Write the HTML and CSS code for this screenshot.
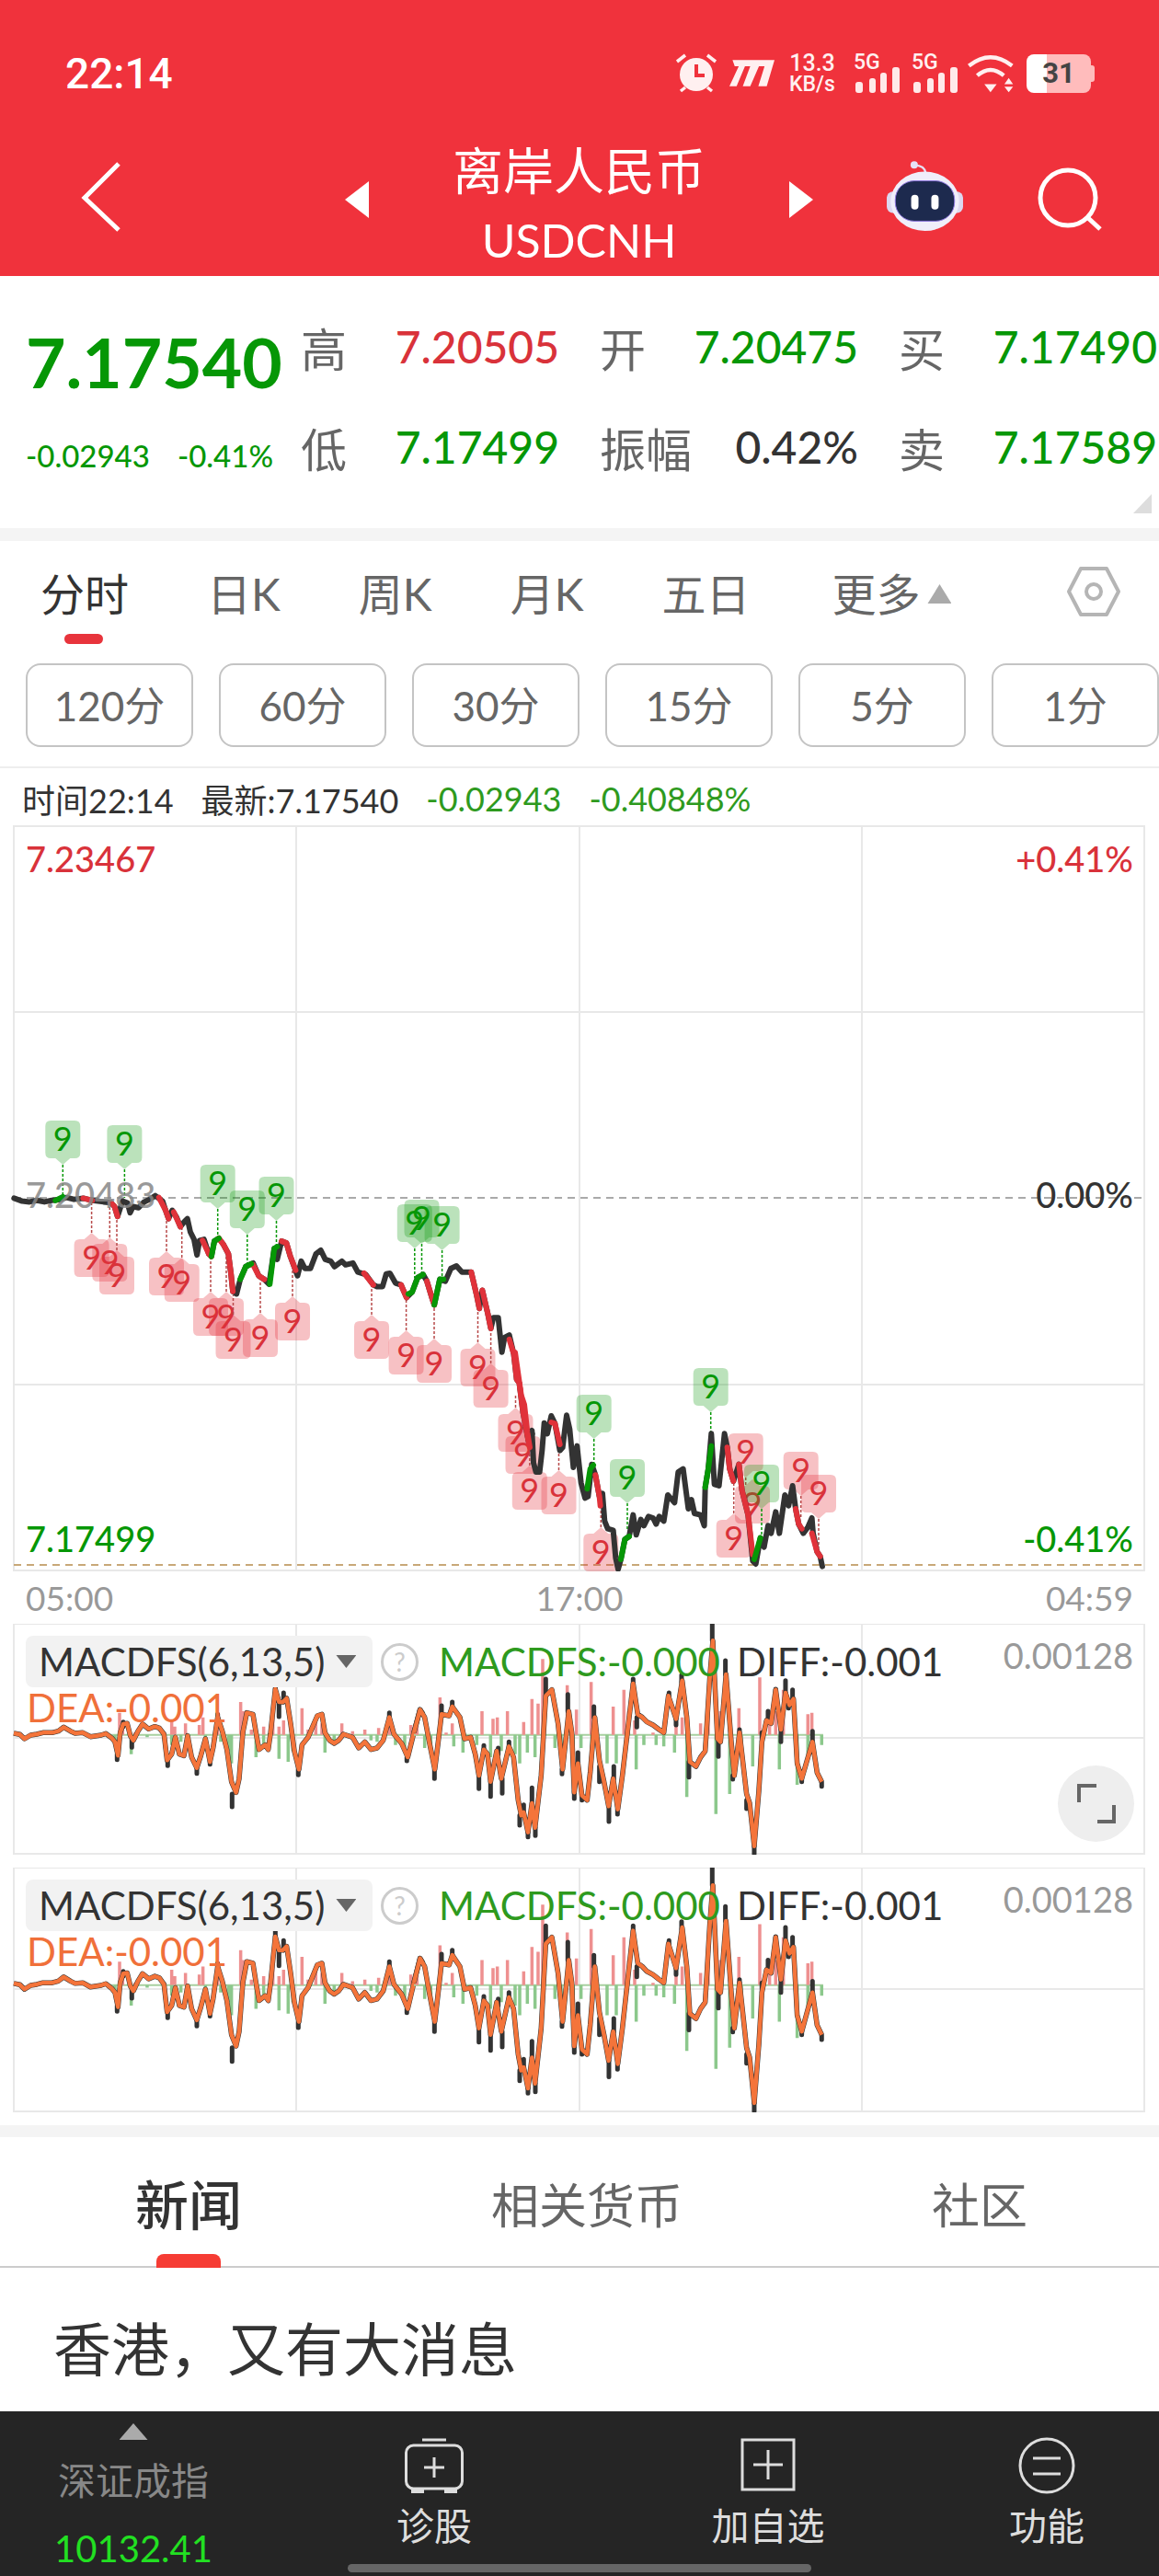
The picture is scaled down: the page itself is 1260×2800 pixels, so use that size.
FILE: index.html
```html
<!DOCTYPE html>
<html>

	<head>
		<meta charset="utf-8">
		<title>USDCNH</title>
		<link rel="stylesheet" href="styles.css">
	</head>

	<body>
		<div id="page">
			<div id="topbar">
				<div class="status">
					<span class="clock">22:14</span>
					<div class="status-icons">
						<svg width="46" height="44" viewBox="0 0 46 44">
							<circle cx="23" cy="23" r="18" fill="#fff0f0"/>
							<path d="M23 12V24H32" fill="none" stroke="#f0323c" stroke-width="4"/>
							<path d="M2 9L11 2M35 2L44 9M6 41L11 37M40 41L35 37" stroke="#fff0f0" stroke-width="3.5" fill="none"/>
						</svg>
						<svg width="49" height="29" viewBox="205 72 145 85">
							<path d="M215 72H350L325 157H298L318 92H300L272 157H248L272 92H255L228 157H205L235 92H222Z" fill="#fff0f0"/>
						</svg>
						<div class="speed"><b>13.3</b><span>KB/s</span></div>
						<svg class="signal" width="56" height="54" viewBox="-3 -10 56 54">
							<text class="sig-text" x="0" y="17">5G</text>
							<rect class="sig-bar" x="2" y="31" width="8" height="12" rx="3"/>
							<rect class="sig-bar" x="17" y="27" width="7" height="16" rx="3"/>
							<rect class="sig-bar" x="29" y="21" width="7" height="22" rx="3"/>
							<rect class="sig-bar" x="42" y="15" width="8" height="28" rx="3"/>
						</svg>
						<svg class="signal" width="56" height="54" viewBox="-3 -10 56 54">
							<text class="sig-text" x="0" y="17">5G</text>
							<rect class="sig-bar" x="2" y="31" width="8" height="12" rx="3"/>
							<rect class="sig-bar" x="17" y="27" width="7" height="16" rx="3"/>
							<rect class="sig-bar" x="29" y="21" width="7" height="22" rx="3"/>
							<rect class="sig-bar" x="42" y="15" width="8" height="28" rx="3"/>
						</svg>
						<svg class="wifi" width="52" height="43" viewBox="998 50 155 128">
							<path d="M1005 90Q1075 35 1145 90M1032 122Q1075 85 1118 122" fill="none" stroke="#fff0f0" stroke-width="13"/>
							<path d="M1055 150H1095L1075 176ZM1120 150H1148L1134 130ZM1120 158H1148L1134 176Z" fill="#fff0f0"/>
						</svg>
						<div class="battery">31</div>
					</div>
				</div>
				<div class="nav">
					<svg class="back" width="45" height="78" viewBox="0 0 45 78">
						<path d="M41 3L4 40L41 75" fill="none" stroke="#fff" stroke-width="5"/>
					</svg>
					<div class="tri tri-left"></div>
					<div class="title">
						<div class="title-cn">离岸人民币</div>
						<div class="title-en">USDCNH</div>
					</div>
					<div class="tri tri-right"></div>
					<svg class="robot" width="85" height="77" viewBox="728 405 254 232">
						<path d="M820 418Q855 420 858 445" fill="none" stroke="#e6e2f6" stroke-width="7"/>
						<circle cx="820" cy="418" r="12" fill="#e6e2f6"/>
						<rect x="730" y="505" width="250" height="70" rx="20" fill="#dcd8f0"/>
						<ellipse cx="855" cy="537" rx="112" ry="97" fill="#f0eefa"/>
						<rect x="758" y="470" width="194" height="132" rx="62" fill="#1d2a4e" stroke="#8f78e0" stroke-width="3"/>
						<rect x="810" y="516" width="24" height="48" rx="12" fill="#fff"/>
						<rect x="876" y="516" width="24" height="48" rx="12" fill="#fff"/>
					</svg>
					<svg class="search" width="75" height="72" viewBox="0 0 75 72">
						<circle cx="36" cy="35" r="30" fill="none" stroke="#fff" stroke-width="5"/>
						<path d="M58 57L71 69" stroke="#fff" stroke-width="5"/>
					</svg>
				</div>
			</div>

			<div class="quote">
				<div class="quote-main">
					<div class="price">7.17540</div>
					<div class="change"><span>-0.02943</span><span>-0.41%</span></div>
				</div>
				<div class="quote-grid">
					<div class="cell"><span class="key">高</span><span class="val red">7.20505</span></div>
					<div class="cell"><span class="key">开</span><span class="val green">7.20475</span></div>
					<div class="cell"><span class="key">买</span><span class="val green">7.17490</span></div>
					<div class="cell"><span class="key">低</span><span class="val green">7.17499</span></div>
					<div class="cell"><span class="key">振幅</span><span class="val dark">0.42%</span></div>
					<div class="cell"><span class="key">卖</span><span class="val green">7.17589</span></div>
				</div>
				<div class="corner"></div>
			</div>
			<div class="band"></div>

			<div class="tabs">
				<div class="tab selected">分时</div>
				<div class="tab">日K</div>
				<div class="tab">周K</div>
				<div class="tab">月K</div>
				<div class="tab">五日</div>
				<div class="tab more">更多<i></i></div>
				<svg class="hex" width="60" height="56" viewBox="0 0 60 56">
					<path d="M16 3H44L57 28L44 53H16L3 28Z" fill="none" stroke="#b5b5b5" stroke-width="4" stroke-linejoin="round"/>
					<circle cx="30" cy="28" r="8" fill="none" stroke="#b5b5b5" stroke-width="4"/>
				</svg>
			</div>
			<div class="periods">
				<div class="period">120分</div>
				<div class="period">60分</div>
				<div class="period">30分</div>
				<div class="period">15分</div>
				<div class="period">5分</div>
				<div class="period">1分</div>
			</div>
			<div class="info">
				<span>时间22:14</span>
				<span>最新:7.17540</span>
				<span class="info-green">-0.02943</span>
				<span class="info-green">-0.40848%</span>
			</div>

			<div class="chart">
				<svg class="canvas" width="1260" height="811" viewBox="0 897 1260 811">
					<path class="grid" d="M15 898H1244V1707H15ZM15 1100H1244M15 1505H1244M322 898V1707M630 898V1707M937 898V1707"/>
					<path class="dash-gray" d="M15 1302H1244"/>
					<path class="dash-brown" d="M15 1701H1244"/>
					<defs>
						<path id="pinDown" d="M0 0L-8 -7H-13Q-19 -7 -19 -13V-42Q-19 -48 -13 -48H13Q19 -48 19 -42V-13Q19 -7 13 -7H8Z"/>
						<path id="pinUp" d="M0 0L-8 7H-13Q-19 7 -19 13V42Q-19 48 -13 48H13Q19 48 19 42V13Q19 7 13 7H8Z"/>
					</defs>

					<!-- red pins, tip up -->
					<g class="pin sell" transform="translate(99.6 1340)"><line y2="-35"/><use href="#pinUp"/><text y="40">9</text></g>
					<g class="pin sell" transform="translate(119.3 1345)"><line y2="-36"/><use href="#pinUp"/><text y="40">9</text></g>
					<g class="pin sell" transform="translate(127 1359)"><line y2="-36"/><use href="#pinUp"/><text y="40">9</text></g>
					<g class="pin sell" transform="translate(181 1360)"><line y2="-35"/><use href="#pinUp"/><text y="40">9</text></g>
					<g class="pin sell" transform="translate(197.7 1367)"><line y2="-32"/><use href="#pinUp"/><text y="40">9</text></g>
					<g class="pin sell" transform="translate(229 1404)"><line y2="-36"/><use href="#pinUp"/><text y="40">9</text></g>
					<g class="pin sell" transform="translate(246 1404)"><line y2="-44"/><use href="#pinUp"/><text y="40">9</text></g>
					<g class="pin sell" transform="translate(253.5 1429)"><line y2="-21"/><use href="#pinUp"/><text y="40">9</text></g>
					<g class="pin sell" transform="translate(283 1427)"><line y2="-35"/><use href="#pinUp"/><text y="40">9</text></g>
					<g class="pin sell" transform="translate(318 1409)"><line y2="-29"/><use href="#pinUp"/><text y="40">9</text></g>
					<g class="pin sell" transform="translate(404 1429)"><line y2="-35"/><use href="#pinUp"/><text y="40">9</text></g>
					<g class="pin sell" transform="translate(441.6 1446)"><line y2="-35"/><use href="#pinUp"/><text y="40">9</text></g>
					<g class="pin sell" transform="translate(472 1455)"><line y2="-36"/><use href="#pinUp"/><text y="40">9</text></g>
					<g class="pin sell" transform="translate(519.5 1459)"><line y2="-36"/><use href="#pinUp"/><text y="40">9</text></g>
					<g class="pin sell" transform="translate(533.6 1482)"><line y2="-36"/><use href="#pinUp"/><text y="40">9</text></g>
					<g class="pin sell" transform="translate(560.5 1530)"><line y2="-15"/><use href="#pinUp"/><text y="40">9</text></g>
					<g class="pin sell" transform="translate(568.5 1554)"><line y2="-19"/><use href="#pinUp"/><text y="40">9</text></g>
					<g class="pin sell" transform="translate(575.8 1593)"><line y2="-19"/><use href="#pinUp"/><text y="40">9</text></g>
					<g class="pin sell" transform="translate(607.5 1598)"><line y2="-22"/><use href="#pinUp"/><text y="40">9</text></g>
					<g class="pin sell" transform="translate(653.3 1660)"><line y2="-20"/><use href="#pinUp"/><text y="40">9</text></g>
					<g class="pin sell" transform="translate(797.7 1645)"><line y2="-38"/><use href="#pinUp"/><text y="40">9</text></g>
					<g class="pin sell" transform="translate(818 1608)"><use href="#pinUp"/><text y="40">9</text></g>
					<g class="pin sell" transform="translate(810.7 1606)"><line y2="10"/><use href="#pinDown"/><text y="-15">9</text></g>
					<g class="pin sell" transform="translate(870.7 1626)"><line y2="24"/><use href="#pinDown"/><text y="-15">9</text></g>
					<g class="pin sell" transform="translate(890 1651)"><line y2="31"/><use href="#pinDown"/><text y="-15">9</text></g>

					<!-- green pins, tip down -->
					<g class="pin buy" transform="translate(68.3 1266)"><line y2="36"/><use href="#pinDown"/><text y="-15">9</text></g>
					<g class="pin buy" transform="translate(135.4 1271)"><line y2="31"/><use href="#pinDown"/><text y="-15">9</text></g>
					<g class="pin buy" transform="translate(236.7 1314)"><line y2="32"/><use href="#pinDown"/><text y="-15">9</text></g>
					<g class="pin buy" transform="translate(268.8 1342)"><line y2="31"/><use href="#pinDown"/><text y="-15">9</text></g>
					<g class="pin buy" transform="translate(300.5 1327)"><line y2="28"/><use href="#pinDown"/><text y="-15">9</text></g>
					<g class="pin buy" transform="translate(450.8 1357)"><line y2="32"/><use href="#pinDown"/><text y="-15">9</text></g>
					<g class="pin buy" transform="translate(458.5 1352)"><line y2="33"/><use href="#pinDown"/><text y="-15">9</text></g>
					<g class="pin buy" transform="translate(480.6 1359)"><line y2="30"/><use href="#pinDown"/><text y="-15">9</text></g>
					<g class="pin buy" transform="translate(645.7 1564)"><line y2="28"/><use href="#pinDown"/><text y="-15">9</text></g>
					<g class="pin buy" transform="translate(682 1634)"><line y2="29"/><use href="#pinDown"/><text y="-15">9</text></g>
					<g class="pin buy" transform="translate(772.7 1535)"><line y2="23"/><use href="#pinDown"/><text y="-15">9</text></g>
					<g class="pin buy" transform="translate(828 1640)"><line y2="28"/><use href="#pinDown"/><text y="-15">9</text></g>

					<g transform="translate(0 1100) scale(.4018 .3954)">
						<polyline class="ln-black" points="38,512 60,520 80,522 100,518 120,522 140,518 160,516 180,510 200,515 225,512 250,518 280,522 300,524 310,535 318,562 325,540 332,520 345,525 352,552 360,535 375,538 390,522 405,515 420,505 440,520 448,545 456,568 466,545 478,565 488,590 500,575 507,568 515,605 525,625 533,668 540,628 552,625 565,665 572,672 580,630 592,622 605,640 618,665 625,720 630,768 640,775 650,735 665,700 685,690 700,725 715,735 728,748 742,650 750,680 762,630 775,635 785,670 805,725 815,685 825,705 840,705 855,665 868,655 880,680 895,685 905,700 925,685 935,695 955,690 968,715 990,722 1010,750 1020,755 1035,755 1045,720 1055,718 1070,745 1085,750 1100,785 1115,770 1130,730 1145,722 1155,740 1170,790 1175,805 1190,735 1205,740 1220,705 1235,698 1250,715 1275,715 1290,780 1297,815 1305,765 1320,830 1328,870 1335,840 1348,840 1358,935 1365,895 1378,888 1390,940 1398,1010 1405,1020 1415,1100 1430,1180 1440,1160"/>
						<path class="ln-red" d="M225 512L250 518M300 524L310 535L318 562M430 510L448 545L456 568M470 550L488 590M548 628L565 665L572 672M592 622L605 640L618 665L625 720L630 768M685 695L700 725L715 735M762 630L775 635L785 670L800 710M985 718L1010 750M1085 750L1100 785M1155 740L1170 790L1175 805M1275 715L1290 780L1297 815M1305 765L1320 830L1328 870M1378 900L1390 940L1398 1010L1405 1020L1415 1100L1430 1180L1440 1200"/>
						<path class="ln-green" d="M150 518L170 508M572 672L580 630L592 622M650 735L665 700L680 692M730 748L742 650L750 645M1105 775L1115 770L1130 730L1145 722M1175 805L1190 735L1200 735"/>
					</g>
					<g transform="translate(560 1460) scale(.3333)">
						<polyline class="ln-black" points="45,300 55,285 60,390 68,420 80,420 88,350 95,260 105,295 118,237 130,262 146,350 155,340 168,235 178,280 190,405 202,335 215,455 228,505 238,500 250,395 262,430 275,500 285,490 292,580 302,605 320,610 328,700 336,737 345,705 358,640 372,630 385,560 395,625 410,575 420,595 435,565 450,570 460,590 470,565 485,580 498,495 520,520 532,420 548,410 565,540 575,510 585,555 605,560 617,595 620,470 630,410 640,295 650,460 665,465 683,295 692,340 700,410 712,450 730,395 740,480 760,560 775,710 785,720 800,635 812,665 825,595 835,620 850,550 862,620 880,495 892,530 905,465 915,540 925,590 940,620 955,600 968,570 972,620 985,680 995,695 1002,728"/>
						<path class="ln-red" d="M0 30L10 100L20 170L30 200L40 290L48 340M118 258L130 262L146 330M262 430L275 500L278 530M692 340L700 410L712 450M730 395L740 480L760 560L775 690M915 540L925 590L935 605M968 620L985 680L995 695"/>
						<path class="ln-green" d="M235 475L245 410L255 398M345 705L358 640L372 630M620 470L630 410L640 335M780 705L800 635"/>
					</g>
				</svg>
				<span class="lab lab-tl red">7.23467</span>
				<span class="lab lab-tr red">+0.41%</span>
				<span class="lab lab-ml gray">7.20483</span>
				<span class="lab lab-mr dark">0.00%</span>
				<span class="lab lab-bl green">7.17499</span>
				<span class="lab lab-br green">-0.41%</span>
			</div>
			<div class="axis"><span>05:00</span><span>17:00</span><span>04:59</span></div>

			<div class="sub sub-one">
				<svg class="canvas" width="1260" height="251" viewBox="0 1765 1260 251">
					<path class="grid" d="M15 1765H1244V2015H15ZM15 1889H1244M322 1765V2015M630 1765V2015M937 1765V2015"/>
					<g id="macd">
						<g transform="translate(10 1760) scale(.3333)">
							<path class="zero" d="M330 377H1350"/>
							<path class="bar-red" d="M360 377V305M370 377V350M410 377V370M530 377V330M540 377V350M575 377V340M620 377V345M632 377V320M680 377V315M755 377V270M765 377V300M790 377V360M830 377V350M860 377V320M880 377V350M895 377V330M955 377V290M975 377V360M1000 377V330M1020 377V340M1085 377V340M1120 377V365M1160 377V360M1205 377V355M1240 377V330M1310 377V345M1325 377V340"/>
							<path class="bar-green" d="M345 377V400M398 377V440M450 377V385M530 377V410M560 377V400M585 377V420M640 377V430M690 377V400M715 377V430M725 377V470M805 377V450M830 377V420M880 377V455M910 377V465M925 377V430M1030 377V435M1060 377V410M1180 377V395M1200 377V400M1260 377V410M1290 377V430"/>
							<path class="tips" d="M352 440V458M372 335V350M400 385V418M517 460V478M612 485V503M655 465V473M680 310V325M727 570V612M868 190V228M880 270V318M895 240V270M943 490V508M1297 450V462M1240 305V320"/>
							<polyline class="ln-dark" points="15,372 35,376 50,390 70,378 90,375 110,370 140,370 160,365 178,352 200,365 215,372 240,370 265,383 300,378 315,373 335,388 345,400 355,445 362,370 372,342 385,340 395,380 405,395 420,365 435,342 455,358 475,350 490,355 505,375 515,460 530,440 542,385 555,440 570,445 582,380 595,450 612,485 625,445 640,390 655,465 665,420 680,320 695,365 710,425 725,530 740,565 750,520 762,370 775,305 795,310 805,370 815,425 835,410 845,425 852,375 868,228 880,270 893,270 905,258 918,340 930,430 945,490 955,410 975,385 990,350 1005,315 1020,310 1030,370 1045,395 1060,405 1075,395 1090,375 1120,385 1140,420 1160,400 1180,425 1200,420 1220,395 1240,320 1255,375 1280,405 1300,450 1320,370 1340,295 1350,310"/>
							<polyline class="ln-orange" points="15,372 35,376 50,390 70,378 90,375 110,370 140,370 160,365 178,352 200,365 215,372 240,370 265,383 300,378 315,373 335,388 345,400 355,445 362,370 372,342 385,340 395,380 405,395 420,365 435,342 455,358 475,350 490,355 505,375 515,460 530,440 542,385 555,440 570,445 582,380 595,450 612,485 625,445 640,390 655,465 665,420 680,320 695,365 710,425 725,530 740,565 750,520 762,370 775,305 795,310 805,370 815,425 835,410 845,425 852,375 868,228 880,270 893,270 905,258 918,340 930,430 945,490 955,410 975,385 990,350 1005,315 1020,310 1030,370 1045,395 1060,405 1075,395 1090,375 1120,385 1140,420 1160,400 1180,425 1200,420 1220,395 1240,320 1255,375 1280,405 1300,450 1320,370 1340,295 1350,310"/>
						</g>
						<g transform="translate(450 1760) scale(.3333)">
							<path class="zero" d="M0 377H1335"/>
							<path class="bar-red" d="M10 377V345M85 377V255M105 377V370M125 377V340M222 377V300M258 377V325M272 377V320M305 377V300M358 377V335M385 377V260M405 377V275M420 377V130M500 377V215M530 377V295M578 377V205M650 377V285M685 377V230M700 377V300M720 377V330M780 377V370M855 377V350M875 377V320M935 377V340M960 377V300M1000 377V300M1060 377V290M1128 377V190M1160 377V320M1180 377V300M1205 377V230M1285 377V310M1298 377V305"/>
							<path class="bar-green" d="M35 377V420M55 377V430M130 377V415M160 377V435M205 377V410M250 377V450M285 377V430M330 377V440M345 377V470M370 377V435M395 377V450M460 377V420M480 377V440M520 377V410M545 377V420M580 377V430M630 377V470M660 377V470M725 377V490M750 377V410M790 377V410M815 377V415M850 377V435M890 377V580M985 377V635M1030 377V570M1068 377V420M1105 377V480M1192 377V490M1250 377V540M1285 377V440M1330 377V410"/>
							<path class="tips" d="M67 490V520M90 282V310M125 270V290M212 510V553M228 412V430M250 530V578M275 420V440M288 520V568M310 400V420M372 695V710M396 680V706M358 605V630M385 550V600M345 640V672M430 195V250M483 490V505M502 245V300M523 560V585M535 435V470M548 575V590M587 285V320M605 480V530M636 610V660M652 480V520M664 620V636M715 195V215M727 320V352M832 240V260M855 325V345M873 182V205M897 465V515M973 15V70M993 390V448M1016 135V180M1040 510V522M1062 360V380M1085 590V618M1110 740V765M1135 370V400M1155 300V330M1180 228V240M1212 200V240M1222 270V290M1235 230V260M1197 360V400M1265 520V530M1300 365V400M1330 530V545"/>
							<polyline class="ln-dark" points="0,370 20,295 35,320 50,400 68,490 78,410 90,310 115,315 125,285 150,320 165,390 185,385 200,440 212,510 228,425 240,440 250,530 270,430 285,520 310,415 325,450 340,590 350,640 358,630 372,695 385,600 395,680 415,510 430,250 450,230 470,340 485,490 505,300 515,370 523,565 535,470 548,575 565,590 575,500 590,320 605,460 620,530 635,610 650,520 665,620 680,510 695,380 715,210 730,310 745,320 760,335 780,345 800,360 815,370 830,250 855,325 875,200 890,320 900,465 920,480 935,450 950,430 965,190 975,70 990,390 1000,400 1018,180 1035,400 1045,510 1062,370 1085,570 1095,600 1110,740 1125,560 1135,400 1150,330 1165,340 1180,230 1197,360 1212,240 1225,280 1238,260 1250,470 1265,520 1300,400 1315,500 1330,530"/>
							<polyline class="ln-orange" points="0,370 20,295 35,320 50,400 68,490 78,410 90,310 115,315 125,285 150,320 165,390 185,385 200,440 212,510 228,425 240,440 250,530 270,430 285,520 310,415 325,450 340,590 350,640 358,630 372,695 385,600 395,680 415,510 430,250 450,230 470,340 485,490 505,300 515,370 523,565 535,470 548,575 565,590 575,500 590,320 605,460 620,530 635,610 650,520 665,620 680,510 695,380 715,210 730,310 745,320 760,335 780,345 800,360 815,370 830,250 855,325 875,200 890,320 900,465 920,480 935,450 950,430 965,190 975,70 990,390 1000,400 1018,180 1035,400 1045,510 1062,370 1085,570 1095,600 1110,740 1125,560 1135,400 1150,330 1165,340 1180,230 1197,360 1212,240 1225,280 1238,260 1250,470 1265,520 1300,400 1315,500 1330,530"/>
						</g>
					</g>
				</svg>
				<div class="legend">
					<div class="picker">MACDFS(6,13,5)<i></i></div>
					<div class="help">?</div>
					<span class="leg-macd">MACDFS:-0.000</span>
					<span class="leg-diff">DIFF:-0.001</span>
					<span class="leg-max">0.00128</span>
				</div>
				<div class="leg-dea">DEA:-0.001</div>
				<div class="expand">
					<svg width="42" height="43" viewBox="0 0 42 43">
						<path d="M21 2H2V20M22 41H40V23" fill="none" stroke="#666" stroke-width="4"/>
					</svg>
				</div>
			</div>

			<div class="sub sub-two">
				<svg class="canvas" width="1260" height="266" viewBox="0 2030 1260 266">
					<path class="grid" d="M15 2030H1244V2295H15ZM15 2162H1244M322 2030V2295M630 2030V2295M937 2030V2295"/>
					<use href="#macd" transform="translate(0 2158) scale(1 1.06) translate(0 -1886)"/>
				</svg>
				<div class="legend">
					<div class="picker">MACDFS(6,13,5)<i></i></div>
					<div class="help">?</div>
					<span class="leg-macd">MACDFS:-0.000</span>
					<span class="leg-diff">DIFF:-0.001</span>
					<span class="leg-max">0.00128</span>
				</div>
				<div class="leg-dea">DEA:-0.001</div>
			</div>

			<div class="band band-low"></div>
			<div class="news-tabs">
				<div class="news-tab selected">新闻</div>
				<div class="news-tab">相关货币</div>
				<div class="news-tab">社区</div>
			</div>
			<div class="headline">香港，又有大消息</div>

			<div class="bottom">
				<div class="index">
					<i></i>
					<div class="index-name">深证成指</div>
					<div class="index-num">10132.41</div>
				</div>
				<div class="action">
					<svg width="66" height="62" viewBox="0 0 66 62">
						<path d="M20 3H46" stroke="#ddd" stroke-width="3"/>
						<rect x="2.5" y="9" width="61" height="47" rx="8" fill="none" stroke="#ddd" stroke-width="3"/>
						<path d="M33 22V44M22 33H44" stroke="#ddd" stroke-width="3"/>
						<path d="M8 57H22V61H8ZM44 57H58V61H44Z" fill="#ddd"/>
					</svg>
					<span>诊股</span>
				</div>
				<div class="action">
					<svg width="60" height="62" viewBox="0 0 60 62">
						<rect x="2" y="3" width="56" height="54" fill="none" stroke="#ddd" stroke-width="3"/>
						<path d="M30 14V46M14 30H46" stroke="#ddd" stroke-width="3"/>
					</svg>
					<span>加自选</span>
				</div>
				<div class="action">
					<svg width="62" height="62" viewBox="0 0 62 62">
						<circle cx="31" cy="31" r="29" fill="none" stroke="#ddd" stroke-width="3"/>
						<path d="M16 23H46M16 40H46" stroke="#ddd" stroke-width="3"/>
					</svg>
					<span>功能</span>
				</div>
				<div class="homebar"></div>
			</div>
		</div>
	</body>

</html>
```

FILE: styles.css
```css
* {
	box-sizing: border-box;
}
body {
	margin: 0px;
	background-color: #fff;
	font-family: Lato, "Noto Sans CJK SC", sans-serif;
	color: #333;
}
#page {
	position: relative;
	width: 1260px;
	height: 2800px;
	overflow: hidden;
}
.red {
	color: #d9323a;
}
.green {
	color: #069706;
}
.dark {
	color: #333;
}
.gray {
	color: #888;
}

/* 顶部 */
#topbar {
	height: 300px;
	background-color: #f0323c;
	color: #fff;
}
.status {
	display: flex;
	align-items: center;
	height: 143px;
	padding: 16px 70px 0px 71px;
}
.clock {
	font-family: Roboto, sans-serif;
	font-size: 46px;
	font-weight: 500;
}
.status-icons {
	display: flex;
	align-items: center;
	gap: 13px;
	height: 54px;
	margin-left: auto;
}
.speed {
	display: flex;
	flex-direction: column;
	align-items: center;
	width: 48px;
	margin: 0px 8px 0px 4px;
	font-family: Roboto, sans-serif;
	font-weight: 500;
	color: #fff0f0;
}
.speed b {
	font-size: 25px;
	font-weight: 500;
	line-height: 24px;
}
.speed span {
	font-size: 23px;
	line-height: 22px;
}
.signal {
	margin: -10px -3px 0px -3px;
}
.sig-text {
	font-family: Roboto, sans-serif;
	font-size: 23px;
	font-weight: 500;
	fill: #fff0f0;
}
.sig-bar {
	fill: #ffe9e9;
}
.wifi {
	margin-left: -3px;
}
.battery {
	position: relative;
	width: 70px;
	height: 42px;
	margin-right: 4px;
	border-radius: 8px;
	background: linear-gradient(90deg, #fff 0px, #fff 22px, #ffbcbc 22px);
	color: #444;
	font-family: Roboto, sans-serif;
	font-size: 31px;
	font-weight: 700;
	line-height: 42px;
	text-align: center;
}
.battery:after {
	content: "";
	position: absolute;
	top: 12px;
	right: -4px;
	width: 4px;
	height: 18px;
	border-radius: 0px 3px 3px 0px;
	background-color: #ffbcbc;
}
.nav {
	display: flex;
	align-items: flex-start;
	height: 157px;
	padding: 4px 0px 0px 88px;
}
.back {
	margin-top: 28px;
}
.tri {
	width: 26px;
	height: 40px;
	margin-top: 50px;
	background-color: #fff;
}
.tri-left {
	margin-left: 242px;
	clip-path: polygon(100% 0, 0 50%, 100% 100%);
}
.tri-right {
	clip-path: polygon(0 0, 100% 50%, 0 100%);
}
.title {
	width: 457px;
	text-align: center;
}
.title-cn {
	font-size: 55px;
	line-height: 76px;
}
.title-en {
	font-size: 50px;
	line-height: 76px;
}
.robot {
	margin: 28px 0px 0px 79px;
}
.search {
	margin: 33px 0px 0px 77px;
}

/* 报价 */
.quote {
	position: relative;
	display: flex;
	height: 274px;
	padding: 22px 0px 0px 28px;
}
.quote-main {
	width: 299px;
	padding-top: 16px;
}
.price {
	color: #069706;
	font-size: 75px;
	font-weight: 700;
	line-height: 110px;
}
.change {
	display: flex;
	gap: 30px;
	margin-top: 22px;
	color: #069706;
	font-size: 33px;
	font-weight: 500;
	line-height: 50px;
}
.quote-grid {
	display: grid;
	grid-template-columns: repeat(3, 281px);
	grid-auto-rows: 109px;
	column-gap: 44px;
}
.cell {
	display: flex;
	align-items: center;
	justify-content: space-between;
}
.key {
	color: #666;
	font-size: 50px;
}
.val {
	font-size: 48px;
	font-weight: 500;
}
.corner {
	position: absolute;
	right: 8px;
	bottom: 16px;
	width: 20px;
	height: 21px;
	background-color: #ddd;
	clip-path: polygon(100% 0, 100% 100%, 0 100%);
}
.band {
	height: 14px;
	background-color: #f4f4f4;
}

/* 周期 */
.tabs {
	display: flex;
	align-items: flex-start;
	gap: 85px;
	height: 116px;
	padding-left: 44px;
}
.tab {
	position: relative;
	color: #666;
	font-size: 48px;
	line-height: 116px;
}
.tab.selected {
	color: #333;
}
.tab.selected:after {
	content: "";
	position: absolute;
	top: 101px;
	left: 26px;
	width: 42px;
	height: 11px;
	border-radius: 6px;
	background-color: #e8343c;
}
.more {
	margin-left: 4px;
}
.more i {
	display: inline-block;
	width: 26px;
	height: 21px;
	margin: 0px 0px 8px 8px;
	background-color: #aaa;
	clip-path: polygon(50% 0, 100% 100%, 0 100%);
}
.hex {
	margin: 27px 0px 0px auto;
	margin-right: 41px;
}
.periods {
	display: flex;
	gap: 28px;
	width: 1262px;
	margin-top: 17px;
	padding: 0px 0px 0px 28px;
}
.period {
	flex: 0 0 182px;
	height: 91px;
	border: solid 2px #c4c4c4;
	border-radius: 16px;
	color: #666;
	font-size: 44px;
	line-height: 89px;
	text-align: center;
}
.info {
	display: flex;
	align-items: center;
	gap: 30px;
	height: 64px;
	margin-top: 21px;
	padding: 4px 0px 0px 24px;
	border-top: solid 2px #eee;
	font-size: 36px;
}
.info-green {
	color: #2e9a1e;
}

/* 分时图 */
.chart {
	position: relative;
	height: 811px;
}
.canvas {
	position: absolute;
	top: 0px;
	left: 0px;
}
.canvas * {
	vector-effect: non-scaling-stroke;
}
.grid {
	fill: none;
	stroke: #e8e8e8;
	stroke-width: 2;
}
.dash-gray {
	stroke: #aaa;
	stroke-width: 2;
	stroke-dasharray: 8 6;
}
.dash-brown {
	stroke: #c8a878;
	stroke-width: 2;
	stroke-dasharray: 8 6;
}
.pin text {
	font-family: Lato, sans-serif;
	font-size: 36px;
	text-anchor: middle;
}
.pin line {
	stroke-width: 1.5;
	stroke-dasharray: 3 2;
}
.pin.buy use {
	fill: #0a960a;
	fill-opacity: .28;
}
.pin.buy text {
	fill: #069706;
}
.pin.buy line {
	stroke: #069706;
}
.pin.sell use {
	fill: #e6323c;
	fill-opacity: .3;
}
.pin.sell text {
	fill: #d9323a;
}
.pin.sell line {
	stroke: #b84a4a;
}
.ln-black,
.ln-red,
.ln-green {
	fill: none;
	stroke-width: 6;
	stroke-linejoin: round;
	stroke-linecap: round;
}
.ln-black {
	stroke: #333;
}
.ln-red {
	stroke: #e0323a;
}
.ln-green {
	stroke: #069706;
}
.lab {
	position: absolute;
	font-size: 38px;
	font-weight: 500;
	line-height: 40px;
}
.lab-tl {
	top: 16px;
	left: 28px;
}
.lab-tr {
	top: 16px;
	right: 28px;
}
.lab-ml {
	top: 381px;
	left: 28px;
	opacity: .85;
}
.lab-mr {
	top: 381px;
	right: 28px;
}
.lab-bl {
	top: 755px;
	left: 28px;
}
.lab-br {
	top: 755px;
	right: 28px;
}
.axis {
	display: flex;
	justify-content: space-between;
	height: 57px;
	padding: 7px 28px 0px 28px;
	color: #999;
	font-size: 37px;
	line-height: 44px;
}

/* 副图 */
.sub {
	position: relative;
}
.sub-one {
	height: 251px;
}
.sub-two {
	height: 266px;
	margin-top: 14px;
}
.zero {
	stroke: #a8d0a0;
	stroke-width: 2;
}
.bar-red {
	stroke: #ee9090;
	stroke-width: 3.5;
}
.bar-green {
	stroke: #8cc88c;
	stroke-width: 3.5;
}
.tips,
.ln-dark,
.ln-orange {
	fill: none;
	stroke-linejoin: round;
}
.tips {
	stroke: #333;
	stroke-width: 5;
	stroke-linecap: round;
}
.ln-dark {
	stroke: #333;
	stroke-width: 5.5;
}
.ln-orange {
	stroke: #f4743a;
	stroke-width: 4.5;
}
.legend {
	position: relative;
	display: flex;
	align-items: center;
	height: 69px;
	padding: 13px 28px 0px 28px;
	font-size: 42px;
}
.picker {
	display: flex;
	align-items: center;
	width: 377px;
	height: 56px;
	padding-left: 14px;
	border-radius: 8px;
	background-color: #f2f2f2;
	color: #333;
}
.picker i {
	width: 22px;
	height: 14px;
	margin-left: 12px;
	background-color: #666;
	clip-path: polygon(0 0, 100% 0, 50% 100%);
}
.help {
	width: 41px;
	height: 41px;
	margin-left: 9px;
	border: solid 3px #ccc;
	border-radius: 50%;
	color: #ccc;
	font-size: 28px;
	line-height: 35px;
	text-align: center;
}
.leg-macd {
	margin-left: 22px;
	color: #2e9a1e;
}
.leg-diff {
	margin-left: 18px;
}
.leg-max {
	margin: 0px 0px 14px auto;
	color: #999;
	font-size: 38px;
}
.leg-dea {
	position: relative;
	padding-left: 29px;
	color: #f0703a;
	font-size: 42px;
	line-height: 44px;
}
.expand {
	position: absolute;
	top: 154px;
	left: 1150px;
	display: flex;
	align-items: center;
	justify-content: center;
	width: 83px;
	height: 83px;
	border-radius: 50%;
	background-color: #eee;
}

/* 资讯 */
.band-low {
	height: 13px;
	margin-top: 14px;
}
.news-tabs {
	display: flex;
	justify-content: space-between;
	height: 142px;
	padding: 0px 143px 0px 147px;
	border-bottom: solid 2px #ccc;
}
.news-tab {
	position: relative;
	color: #666;
	font-size: 52px;
	line-height: 148px;
}
.news-tab.selected {
	color: #333;
	font-size: 58px;
	font-weight: 500;
}
.news-tab.selected:after {
	content: "";
	position: absolute;
	top: 127px;
	left: 23px;
	width: 70px;
	height: 15px;
	border-radius: 8px 8px 0px 0px;
	background-color: #f63c34;
}
.headline {
	height: 156px;
	padding: 20px 0px 0px 58px;
	font-size: 63px;
	line-height: 136px;
}

/* 底栏 */
.bottom {
	position: relative;
	display: grid;
	grid-template-columns: 290px 364px 362px 244px;
	height: 179px;
	background-color: #252525;
}
.index {
	display: flex;
	flex-direction: column;
	align-items: center;
	padding-top: 13px;
}
.index i {
	width: 31px;
	height: 18px;
	background-color: #aaa;
	clip-path: polygon(50% 0, 100% 100%, 0 100%);
}
.index-name {
	margin-top: 20px;
	color: #888;
	font-size: 41px;
	line-height: 50px;
}
.index-num {
	margin-top: 21px;
	color: #22e022;
	font-size: 40px;
	line-height: 54px;
}
.action {
	display: flex;
	flex-direction: column;
	align-items: center;
	padding-top: 28px;
	color: #ddd;
	font-size: 41px;
	line-height: 50px;
}
.action svg {
	margin-bottom: 10px;
}
.homebar {
	position: absolute;
	bottom: 4px;
	left: 378px;
	width: 504px;
	height: 9px;
	border-radius: 5px;
	background-color: #666;
}
```
